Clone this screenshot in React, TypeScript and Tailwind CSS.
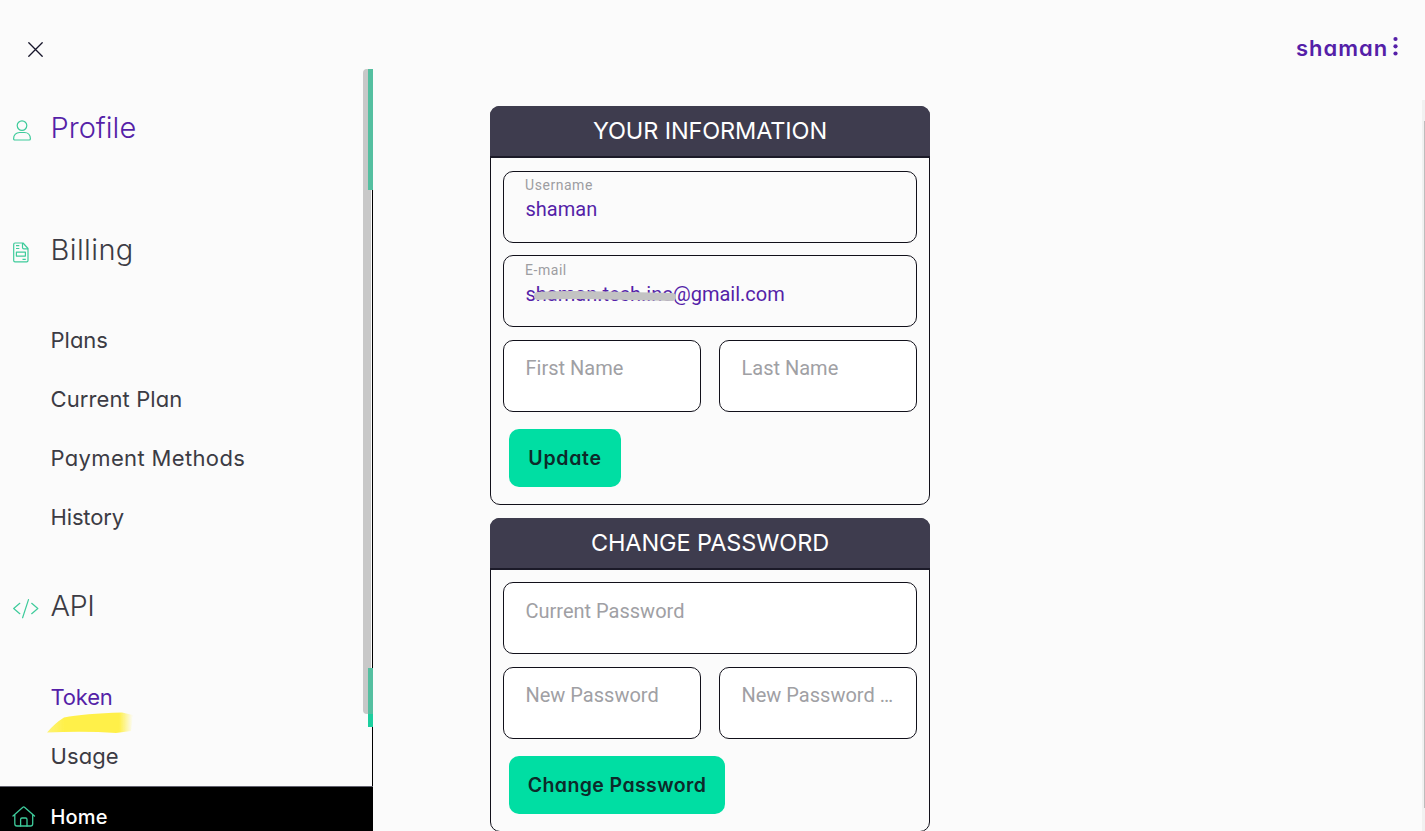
import type { ReactNode } from "react";

const GEO = "font-['Inter','Noto_Sans',sans-serif] [font-feature-settings:'cv11','ss03']";
const ROBOTO = "font-['Roboto',sans-serif]";

function UserIcon() {
  return (
    <svg width="18" height="21" viewBox="0 0 18 21" fill="none" stroke="#3ecb9b" strokeWidth="1.2" strokeLinejoin="round">
      <circle cx="9" cy="5.6" r="4.8" />
      <path d="M.6 18.7c0-3.8 2.6-6.2 6-6.2h4.8c3.4 0 6 2.4 6 6.2q0 1.3-1.2 1.3H1.8Q.6 20 .6 18.7Z" />
    </svg>
  );
}

function InvoiceIcon() {
  return (
    <svg className="relative top-px" width="16" height="21" viewBox="0 0 16 21" fill="none" stroke="#3ecb9b" strokeWidth="1.2" strokeLinejoin="round">
      <path d="M2 1h8l5 5.500V18.400q0 1.400-1.300 1.400H2Q.7 19.800.7 18.400V2.400Q.7 1 2 1Z" />
      <path d="M9.500 1v4.500q0 1.400 1.400 1.400H15M3 3.700h3.300M3 6.500h3.300M9.500 17.300h3.300" />
      <path d="M3.400 10.200h9v3.900h-9z" />
    </svg>
  );
}

function CodeIcon() {
  return (
    <svg width="26" height="20" viewBox="0 0 26 20" fill="none" stroke="#3ecb9b" strokeWidth="1.2" strokeLinecap="round" strokeLinejoin="round">
      <path d="M6.800 4.300.7 9.500l6.100 5.200M18.700 4.300 24.800 9.500l-6.100 5.200M15.500.6 9.600 18.800" />
    </svg>
  );
}

function HomeIcon() {
  return (
    <svg width="24" height="21" viewBox="0 0 24 21" fill="none" stroke="#3ecb9b" strokeWidth="1.3" strokeLinecap="round" strokeLinejoin="round">
      <path d="M1 10 10.600 1.400q1.100-.9 2.200 0L22.500 10M2.800 8.600v9.200q0 2.200 2.200 2.200h13.500q2.200 0 2.200-2.200V8.600" />
      <path d="M8.600 20v-6.600q0-1.400 1.400-1.400h3.600q1.400 0 1.400 1.400V20" />
    </svg>
  );
}

function Section({ icon, label, className }: { icon: ReactNode; label: string; className: string }) {
  return (
    <div className="flex h-[121px] items-center pl-[13px]">
      <span className="w-[37.500px] shrink-0 pt-[2px]">{icon}</span>
      <span className={`text-[29px] leading-none font-light ${className}`}>{label}</span>
    </div>
  );
}

function SubItem({ label, className }: { label: string; className: string }) {
  return (
    <div className="flex h-[59px] items-center pb-[2px] pl-[50.500px]">
      <span className={`text-[22px] leading-none font-normal ${className}`}>{label}</span>
    </div>
  );
}

type FieldProps = { label?: string; value?: string; placeholder?: string; className: string; children?: ReactNode };

function Field({ label, value, placeholder, className, children }: FieldProps) {
  return (
    <div className={`relative h-[72px] min-w-0 flex-1 rounded-[10px] border border-[#11101a] pr-[12px] pl-[21.500px] ${ROBOTO} ${className}`}>
      {label ? (
        <>
          <div className="-ml-[0.5px] text-[14px] leading-[16px] tracking-[0.55px] text-[#9d9da1]">{label}</div>
          <div className="pt-[4px] text-[20px] leading-[24px] text-[#551fa8]">{value}</div>
        </>
      ) : (
        <div className="text-[20px] leading-[26px] whitespace-nowrap text-[#a0a0a4]">{placeholder}</div>
      )}
      {children}
    </div>
  );
}

function CardHeader({ title, className }: { title: string; className: string }) {
  return (
    <div className="flex h-[52px] items-center justify-center rounded-t-[9px] border-b-2 border-[#1b1a28] bg-[#3e3c4e] text-white">
      <span className={`text-[23.500px] leading-none ${className}`}>{title}</span>
    </div>
  );
}

export default function App() {
  return (
    <div className={`flex h-[831px] w-[1425px] overflow-hidden bg-[#fbfbfb] text-[#3c3b44] ${GEO}`}>
      <aside className="flex w-[373px] shrink-0 flex-col">
        <div className="flex h-[69px] shrink-0 items-start pt-[42px] pl-[28px]">
          <svg width="15" height="15" viewBox="0 0 15 15" stroke="#16152a" strokeWidth="1.300" strokeLinecap="round">
            <path d="M.8.8 14.200 14.200M14.200.8.8 14.200" />
          </svg>
        </div>
        <div className="relative h-[717px] shrink-0 border-r border-black">
          <Section icon={<UserIcon />} label="Profile" className="pb-[5px] text-[#551fa8]" />
          <Section icon={<InvoiceIcon />} label="Billing" className="pb-[3px] tracking-[0.4px]" />
          <SubItem label="Plans" className="" />
          <SubItem label="Current Plan" className="tracking-[0.1px]" />
          <SubItem label="Payment Methods" className="tracking-[0.35px]" />
          <SubItem label="History" className="tracking-[-0.15px]" />
          <Section icon={<CodeIcon />} label="API" className="pb-[5px] tracking-[-0.5px]" />
          <SubItem label="Token" className="tracking-[-0.2px] text-[#551fa8]" />
          <SubItem label="Usage" className="tracking-[0.1px]" />
          <div className="absolute top-0 left-[363px] h-[645px] w-[8px] rounded-[4px] bg-[#c8c8c8]" />
          <div className="absolute top-0 left-[368px] h-[121px] w-[5px] bg-[#54bfa0]" />
          <div className="absolute top-[599px] left-[368px] h-[46px] w-[5px] bg-[#54bfa0]" />
          <div className="absolute top-[645px] left-[368px] h-[13px] w-[5px] bg-[#1ccf9f]" />
          <svg className="absolute top-[642px] left-[46px]" width="88" height="24" viewBox="0 0 88 24">
            <defs>
              <linearGradient id="marker" x1="0" x2="1">
                <stop offset="0" stopColor="#fff04a" stopOpacity=".75" />
                <stop offset=".2" stopColor="#fff04a" />
                <stop offset=".84" stopColor="#fff04a" />
                <stop offset="1" stopColor="#fff04a" stopOpacity="0" />
              </linearGradient>
              <filter id="soft">
                <feGaussianBlur stdDeviation=".6" />
              </filter>
            </defs>
            <path d="M1 21.500Q9 12 18 6.500 38 2.500 76 1.500L87 4 85 20 70 22Q40 20 1 21.500Z" fill="url(#marker)" filter="url(#soft)" />
          </svg>
        </div>
        <div className="flex h-[59px] shrink-0 items-center border-t border-[#62626e] bg-black pl-[12px]">
          <span className="w-[38.500px] shrink-0">
            <HomeIcon />
          </span>
          <span className="pt-[2px] text-[20px] leading-none font-medium tracking-[0.2px] text-white">Home</span>
        </div>
      </aside>

      <main className="flex flex-1 flex-col gap-[13px] pt-[106px] pl-[117px]">
        <section className="h-[399px] w-[440px] shrink-0 rounded-[10px] border border-[#11101a]">
          <div className="-mx-px -mt-px">
            <CardHeader title="YOUR INFORMATION" className="tracking-[-0.12px]" />
          </div>
          <div className="flex flex-col px-[12px] pt-[13px]">
            <div className="flex">
              <Field label="Username" value="shaman" className="pt-[5px]" />
            </div>
            <div className="mt-[12px] flex">
              <Field label="E-mail" value="shaman.tech.inc@gmail.com" className="pt-[6px]">
                <svg className="absolute top-[32px] left-[27px]" width="148" height="16" viewBox="0 0 148 16">
                  <path d="M7 8Q30 6.500 75 7.500T141 9" fill="none" stroke="#c3c3c3" strokeWidth="8" strokeLinecap="round" />
                </svg>
              </Field>
            </div>
            <div className="mt-[13px] flex gap-[18px]">
              <Field placeholder="First Name" className="bg-white pt-[14px]" />
              <Field placeholder="Last Name" className="bg-white pt-[14px]" />
            </div>
            <button className="mt-[17px] ml-[6px] h-[58px] w-[112px] rounded-[10px] bg-[#00dea3] pt-[2px] text-[19.500px] font-semibold tracking-[0.7px] text-[#0d2a2a]">
              Update
            </button>
          </div>
        </section>

        <section className="h-[314px] w-[440px] shrink-0 rounded-[10px] border border-[#11101a]">
          <div className="-mx-px -mt-px">
            <CardHeader title="CHANGE PASSWORD" className="tracking-[-0.1px]" />
          </div>
          <div className="flex flex-col px-[12px] pt-[12px]">
            <div className="flex">
              <Field placeholder="Current Password" className="bg-white pt-[15px]" />
            </div>
            <div className="mt-[13px] flex gap-[18px]">
              <Field placeholder="New Password" className="bg-white pt-[14px]" />
              <Field placeholder="New Password …" className="bg-white pt-[14px]" />
            </div>
            <button className="mt-[17px] ml-[6px] h-[58px] w-[216px] rounded-[10px] bg-[#00dea3] pt-[2px] text-[19.500px] font-semibold tracking-[0.4px] whitespace-nowrap text-[#0d2a2a]">
              Change Password
            </button>
          </div>
        </section>
      </main>

      <div className="flex w-[129px] shrink-0 flex-col">
        <div className="flex h-[100px] items-start gap-[5px] pt-[36px]">
          <span className="text-[22px] leading-[24px] font-semibold tracking-[1px] text-[#551fa8]">shaman</span>
          <svg width="5" height="20" viewBox="0 0 5 20" fill="#551fa8">
            <circle cx="2.500" cy="3" r="2.100" />
            <circle cx="2.500" cy="10.300" r="2.100" />
            <circle cx="2.500" cy="17.500" r="2.100" />
          </svg>
        </div>
        <div className="flex w-[3px] flex-1 flex-col items-end self-end bg-[#f1f1f1] pt-[21px]">
          <div className="h-[687px] w-px bg-[#bdbdbd]" />
        </div>
      </div>
    </div>
  );
}
